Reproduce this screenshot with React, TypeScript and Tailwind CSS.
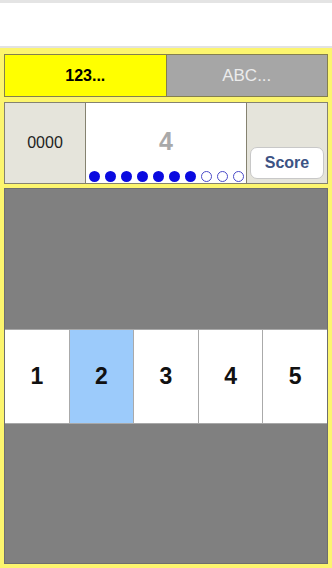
import React from "react";

export default function App() {
  const dots = [1, 1, 1, 1, 1, 1, 1, 0, 0, 0];
  const nums = [1, 2, 3, 4, 5];
  return (
    <div
      className="w-[332px] h-[568px] flex flex-col overflow-hidden bg-white"
      style={{ fontFamily: '"Liberation Sans", Arial, sans-serif' }}
    >
      <div className="h-[48px] shrink-0 border-t-[3px] border-t-[#e4e4e4] border-b-[2px] border-b-[#e2e2e2] bg-white" />
      <div className="flex-1 flex flex-col bg-[#fcf56e] px-[4px] pt-[6px] pb-[4px]">
        <div className="h-[43px] shrink-0 flex border border-[#847f4e]">
          <div className="flex-1 bg-[#ffff00] flex items-center justify-center text-[16px] font-bold text-black border-r border-[#847f4e]">
            123...
          </div>
          <div className="flex-1 bg-[#a6a6a6] flex items-center justify-center text-[17px] text-[#ececec]">
            ABC...
          </div>
        </div>
        <div className="h-[82px] shrink-0 mt-[5px] flex border border-[#858270]">
          <div className="w-[81px] bg-[#e5e4db] flex items-center justify-center text-[16px] text-[#222] border-r border-[#858270]">
            0000
          </div>
          <div className="flex-1 bg-white flex flex-col items-center border-r border-[#858270]">
            <div className="flex-1 flex items-center text-[25px] font-bold text-[#a9a9a9] pt-[10px]">4</div>
            <div className="flex gap-[5px] pb-[1px]">
              {dots.map((d, i) =>
                d ? (
                  <div key={i} className="w-[11px] h-[11px] rounded-full bg-[#0a0ae0]" />
                ) : (
                  <div key={i} className="w-[11px] h-[11px] rounded-full border-[1.5px] border-[#4a4ac8] bg-white" />
                )
              )}
            </div>
          </div>
          <div className="w-[80px] bg-[#e5e4db] flex items-end justify-center pb-[4px]">
            <div className="w-[74px] h-[32px] rounded-[7px] border border-[#c8c8c8] bg-white flex items-center justify-center text-[16px] font-bold text-[#3c5384]">
              Score
            </div>
          </div>
        </div>
        <div className="flex-1 mt-[4px] bg-[#808080] border border-[#6e6e6e] flex items-center">
          <div className="w-full h-[95px] flex bg-white border-y border-[#a8a8a8]">
            {nums.map((n) => (
              <div
                key={n}
                className={
                  "flex-1 flex items-center justify-center text-[23px] font-bold text-[#111] border-r border-[#aaaaaa] last:border-r-0 " +
                  (n === 2 ? "bg-[#9ccbfb]" : "bg-white")
                }
              >
                {n}
              </div>
            ))}
          </div>
        </div>
      </div>
    </div>
  );
}
